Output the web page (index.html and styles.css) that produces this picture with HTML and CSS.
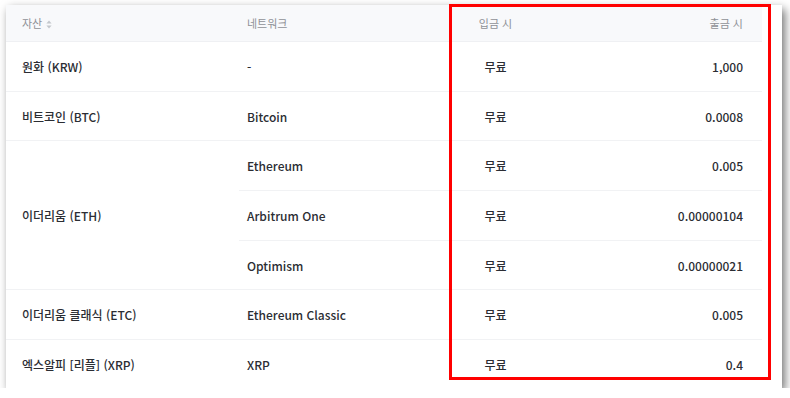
FILE: index.html
```html
<!DOCTYPE html>
<html lang="ko">
<head>
    <meta charset="UTF-8">
    <meta name="viewport" content="width=device-width, initial-scale=1.0">
    <title>입출금 수수료</title>
    <link rel="stylesheet" href="styles.css">
</head>
<body>

    <div class="card">
        <table class="fee-table">
            <colgroup>
                <col class="col-asset">
                <col class="col-network">
                <col class="col-deposit">
                <col class="col-withdraw">
            </colgroup>
            <thead>
                <tr>
                    <th class="asset">자산
                        <svg class="sort" width="6" height="9" viewBox="0 0 6 9">
                            <path d="M3 0.5 L5.6 3.6 H0.4 Z" fill="#c4c7cc"/>
                            <path d="M3 8.5 L5.6 5.4 H0.4 Z" fill="#c4c7cc"/>
                        </svg>
                    </th>
                    <th class="network">네트워크</th>
                    <th class="deposit">입금 시</th>
                    <th class="withdraw">출금 시</th>
                </tr>
            </thead>
            <tbody>
                <tr>
                    <td class="asset">원화 (KRW)</td>
                    <td class="network">-</td>
                    <td class="deposit">무료</td>
                    <td class="withdraw">1,000</td>
                </tr>
                <tr class="short">
                    <td class="asset">비트코인 (BTC)</td>
                    <td class="network">Bitcoin</td>
                    <td class="deposit">무료</td>
                    <td class="withdraw">0.0008</td>
                </tr>
                <tr>
                    <td class="asset" rowspan="3">이더리움 (ETH)</td>
                    <td class="network">Ethereum</td>
                    <td class="deposit">무료</td>
                    <td class="withdraw">0.005</td>
                </tr>
                <tr>
                    <td class="network">Arbitrum One</td>
                    <td class="deposit">무료</td>
                    <td class="withdraw">0.00000104</td>
                </tr>
                <tr class="short">
                    <td class="network">Optimism</td>
                    <td class="deposit">무료</td>
                    <td class="withdraw">0.00000021</td>
                </tr>
                <tr>
                    <td class="asset">이더리움 클래식 (ETC)</td>
                    <td class="network">Ethereum Classic</td>
                    <td class="deposit">무료</td>
                    <td class="withdraw">0.005</td>
                </tr>
                <tr class="last">
                    <td class="asset">엑스알피 [리플] (XRP)</td>
                    <td class="network">XRP</td>
                    <td class="deposit">무료</td>
                    <td class="withdraw">0.4</td>
                </tr>
            </tbody>
        </table>

        <!-- 입금/출금 수수료 강조 박스 -->
        <div class="highlight"></div>
    </div>

</body>
</html>
```

FILE: styles.css
```css
body {
    margin: 0;
    padding: 5px 0 0 6px;
    background-color: #ffffff;
    font-family: "Noto Sans CJK KR", "Noto Sans", sans-serif;
    overflow: hidden;
}

.card {
    position: relative;
    width: 776px;
    background: white;
    box-shadow: 3px 4px 9px rgba(0, 0, 0, 0.55);
}

.fee-table {
    width: 756px;
    border-collapse: collapse;
    table-layout: fixed;
}

.col-asset { width: 233px; }
.col-network { width: 211px; }
.col-deposit { width: 91px; }
.col-withdraw { width: 221px; }

.fee-table th {
    height: 36px;
    padding: 0;
    background-color: #f8f9fb;
    border-bottom: 1px solid #eff0f3;
    color: #8f9197;
    font-size: 11px;
    font-weight: normal;
    text-align: left;
}

.fee-table td {
    height: 49px;
    padding: 0;
    border-bottom: 1px solid #f1f2f4;
    color: #2b2d33;
    font-size: 12px;
    font-weight: 500;
    text-align: left;
}

/* 일부 행은 1px 낮음 */
.fee-table tr.short td {
    height: 48px;
}

.fee-table tr.last td {
    height: 48px;
    border-bottom: none;
}

.asset { padding-left: 16px !important; }
.network { padding-left: 8px !important; }
.fee-table .deposit { text-align: center; }
.fee-table .withdraw {
    text-align: right;
    padding-right: 19px !important;
}

.sort {
    vertical-align: -1px;
    margin-left: 1px;
}

.highlight {
    position: absolute;
    left: 443px;
    top: -1px;
    width: 322px;
    height: 376px;
    box-sizing: border-box;
    border: 3px solid #ff0000;
}
```
